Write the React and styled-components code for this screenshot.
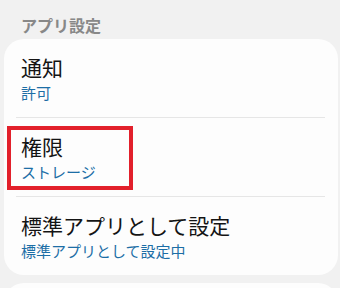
import React from 'react';
import styled, { createGlobalStyle } from 'styled-components';

const GlobalStyle = createGlobalStyle`
    html, body {
        margin: 0;
        padding: 0;
        background: #f1f1f1;
        font-family: "Noto Sans CJK JP", "Noto Sans", sans-serif;
    }
`;

const Page = styled.div`
    width: 340px;
    height: 288px;
    overflow: hidden;
    display: flex;
    flex-direction: column;
`;

const Header = styled.div`
    flex-shrink: 0;
    padding: 13px 0 0 21px;
    height: 26px;
    font-size: 16px;
    font-weight: 700;
    color: #888888;
    line-height: 24px;
`;

const Card = styled.div`
    margin: 0 2px 0 4px;
    background: #fdfdfd;
    border-radius: 20px;
    display: flex;
    flex-direction: column;
    flex-shrink: 0;
`;

const NextCard = styled(Card)`
    margin-top: 8px;
    height: 40px;
`;

const Row = styled.div`
    position: relative;
    height: 78px;
    margin: 0 13px 0 12px;
    padding-left: 5px;
    display: flex;
    flex-direction: column;
    justify-content: center;
    border-top: ${({ $divider }) => ($divider ? '1px solid #e6e6e6' : 'none')};
`;

const Title = styled.div`
    font-size: 21px;
    color: #141414;
    line-height: 27px;
`;

const Sub = styled.div`
    font-size: 15px;
    color: #1c6ea6;
    line-height: 20px;
    margin-top: 2px;
`;

const Highlight = styled.div`
    position: absolute;
    box-sizing: border-box;
    left: -9px;
    top: 8px;
    width: 126px;
    height: 64px;
    border: 4.5px solid #e2202b;
    pointer-events: none;
`;

const items = [
    { title: '通知', sub: '許可' },
    { title: '権限', sub: 'ストレージ', marked: true },
    { title: '標準アプリとして設定', sub: '標準アプリとして設定中' },
];

const App = () => {
    return (
        <Page>
            <GlobalStyle />
            <Header>アプリ設定</Header>
            <Card>
                {items.map((item, index) => (
                    <Row key={index} $divider={index > 0}>
                        <Title>{item.title}</Title>
                        <Sub>{item.sub}</Sub>
                        {item.marked && <Highlight />}
                    </Row>
                ))}
            </Card>
            <NextCard />
        </Page>
    );
};

export default App;
